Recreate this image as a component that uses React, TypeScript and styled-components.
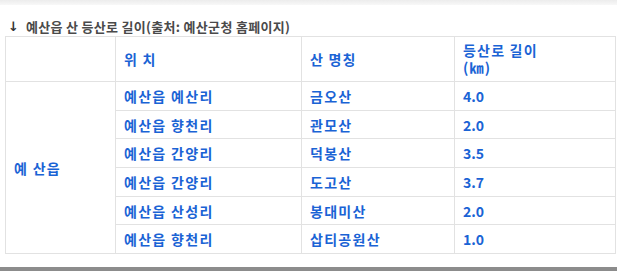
import { createGlobalStyle, styled } from 'styled-components'

const GlobalStyle = createGlobalStyle`
  html, body {
    margin: 0;
    padding: 0;
    background: #fff;
  }
  body {
    font-family: "Noto Sans CJK KR", "Noto Sans", sans-serif;
  }
`

type Row = { place: string; name: string; length: string }

const rows: Row[] = [
  { place: '예산읍 예산리', name: '금오산', length: '4.0' },
  { place: '예산읍 향천리', name: '관모산', length: '2.0' },
  { place: '예산읍 간양리', name: '덕봉산', length: '3.5' },
  { place: '예산읍 간양리', name: '도고산', length: '3.7' },
  { place: '예산읍 산성리', name: '봉대미산', length: '2.0' },
  { place: '예산읍 향천리', name: '삽티공원산', length: '1.0' },
]

export default function App() {
  return (
    <>
      <GlobalStyle />
      <Page>
        <TopShade />
        <Title>
          <Arrow>↓</Arrow>
          예산읍 산 등산로 길이(출처: 예산군청 홈페이지)
        </Title>
        <Table>
          <colgroup>
            <col style={{ width: 110 }} />
            <col style={{ width: 186 }} />
            <col style={{ width: 153 }} />
            <col style={{ width: 161 }} />
          </colgroup>
          <thead>
            <tr>
              <HeadCell />
              <HeadCell>위 치</HeadCell>
              <HeadCell>산 명칭</HeadCell>
              <HeadCell>
                <HeadLine>등산로 길이</HeadLine>
                <HeadLine>(㎞)</HeadLine>
              </HeadCell>
            </tr>
          </thead>
          <tbody>
            {rows.map((r, i) => (
              <tr key={i}>
                {i === 0 && <Cell rowSpan={rows.length}>예 산읍</Cell>}
                <Cell>{r.place}</Cell>
                <Cell>{r.name}</Cell>
                <Cell $num>{r.length}</Cell>
              </tr>
            ))}
          </tbody>
        </Table>
        <BottomBar />
      </Page>
    </>
  )
}

const Page = styled.div`
  width: 617px;
  height: 271px;
  display: flex;
  flex-direction: column;
  overflow: hidden;
`

const TopShade = styled.div`
  height: 5px;
  background: linear-gradient(#ececec, #f8f8f8);
`

const Title = styled.div`
  display: flex;
  align-items: center;
  height: 16px;
  margin: 13px 0 0 8px;
  font-size: 13px;
  font-weight: 700;
  letter-spacing: 0.3px;
  color: #4a4a4a;
  white-space: nowrap;
`

const Arrow = styled.span`
  width: 18px;
  font-family: "DejaVu Sans", sans-serif;
  font-size: 13px;
  font-weight: 700;
  color: #333;
`

const Table = styled.table`
  margin: 2px 0 0 5px;
  width: 610px;
  border-collapse: collapse;
  table-layout: fixed;
  border: 1px solid #e2e2e2;
`

const HeadCell = styled.th`
  height: 44px;
  padding: 0 8px;
  border: 1px solid #e2e2e2;
  text-align: left;
  vertical-align: middle;
  font-size: 14px;
  font-weight: 700;
  letter-spacing: 1.2px;
  color: #1a63d5;
`

const HeadLine = styled.div`
  height: 17px;
  line-height: 17px;
`

const Cell = styled.td<{ $num?: boolean }>`
  height: 27.7px;
  padding: 0 8px;
  border: 1px solid #e2e2e2;
  vertical-align: middle;
  font-size: 14px;
  font-weight: 700;
  line-height: 16px;
  letter-spacing: ${(p) => (p.$num ? '0' : '1.3px')};
  color: #1a63d5;
`

const BottomBar = styled.div`
  margin-top: auto;
  height: 4px;
  background: #8c8c8c;
`
